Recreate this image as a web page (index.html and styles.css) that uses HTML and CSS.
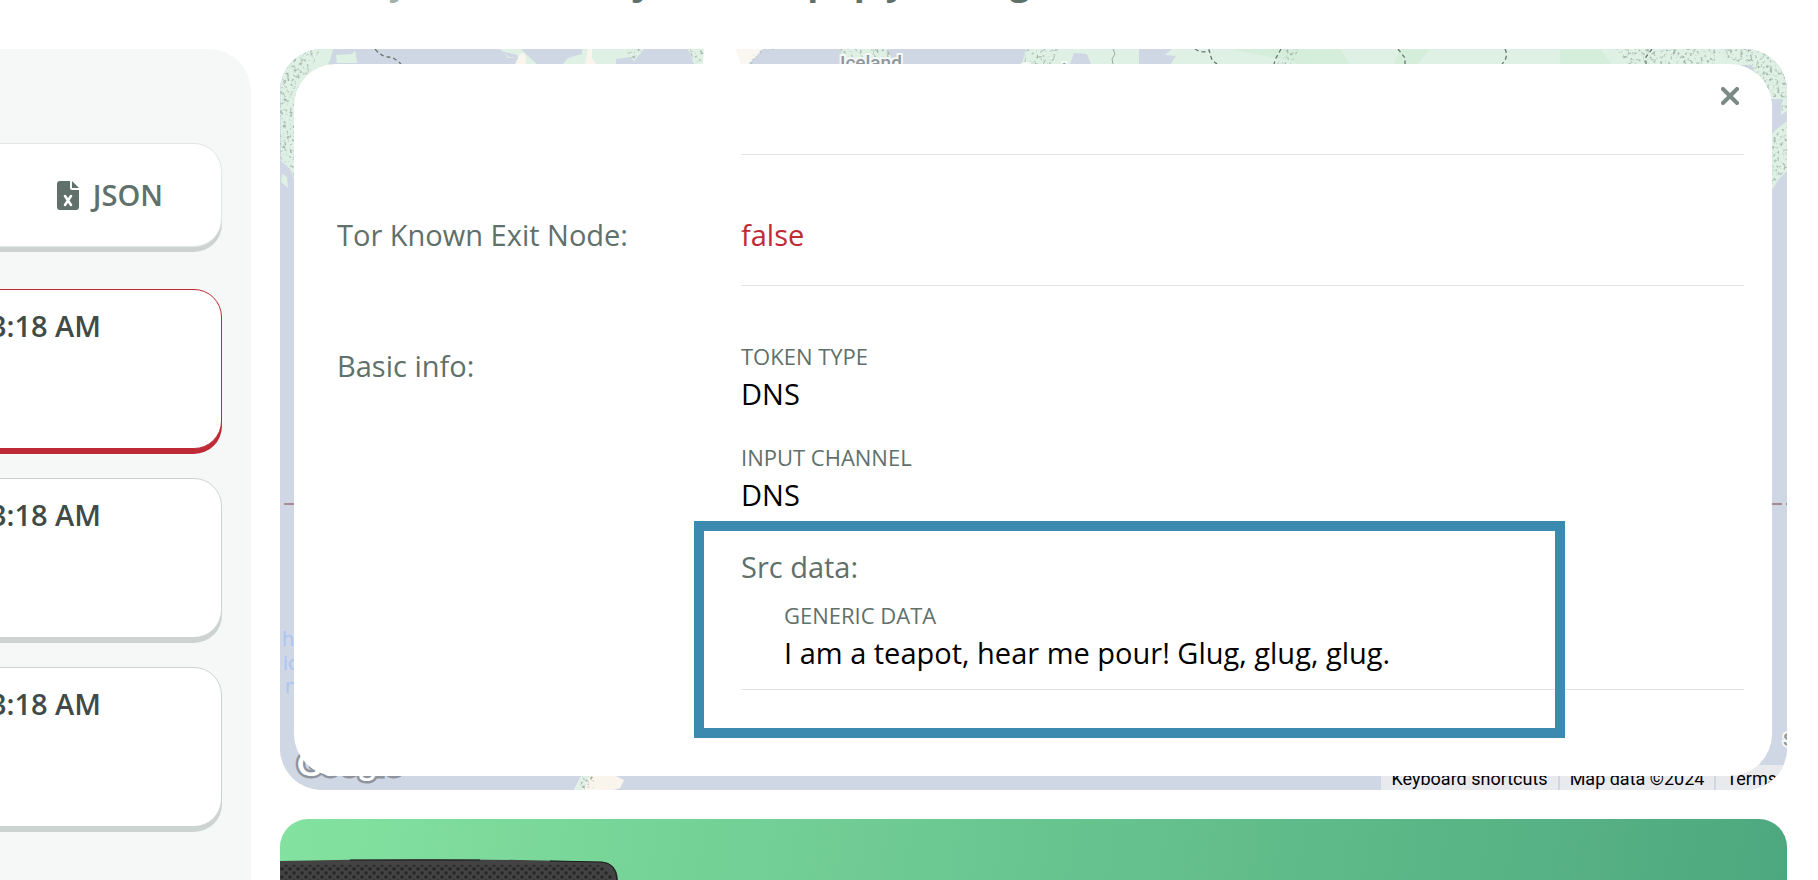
FILE: index.html
```html
<!DOCTYPE html>
<html lang="en">
<head>
    <meta charset="UTF-8">
    <title>Token history</title>
    <link rel="stylesheet" href="styles.css">
</head>
<body>
    <header class="top">
        <h1><span class="muted">History</span> for the new jar in the pup yard log</h1>
    </header>

    <main class="page">
        <aside class="sidebar">
            <div class="card export">
                <button type="button" class="btn-json">
                    <svg class="icon-file" viewBox="0 0 22 29" aria-hidden="true">
                        <path fill="#60706a" d="M3 0h10v7q0 2 2 2h7v17q0 3-3 3H3q-3 0-3-3V3q0-3 3-3z"/>
                        <path fill="#60706a" d="M15 0l7 7h-7z"/>
                        <path fill="none" stroke="#fff" stroke-width="2.6" stroke-linecap="round" d="M8 15l6 9M14 15l-6 9"/>
                    </svg>
                    JSON
                </button>
            </div>
            <div class="card alert active">3:18 AM</div>
            <div class="card alert">3:18 AM</div>
            <div class="card alert">3:18 AM</div>
        </aside>

        <div class="content">
            <section class="map">
                <svg class="map-bg" viewBox="0 0 1507 741" preserveAspectRatio="none" aria-hidden="true">
                    <defs>
                        <filter id="relief" x="0" y="0" width="100%" height="100%">
                            <feTurbulence type="fractalNoise" baseFrequency="0.3" numOctaves="4" seed="4"/>
                            <feColorMatrix values="0 0 0 0 .38  0 0 0 0 .46  0 0 0 0 .42  4 0 0 0 -2.1"/>
                            <feComposite in2="SourceGraphic" operator="in"/>
                        </filter>
                    </defs>
                    <rect width="1507" height="741" fill="#cfd6e4"/>
                    <!-- north america -->
                    <path fill="#dff1e5" d="M0 0h57l-6 14h26L75 0h145l8 9h17l-4 6h89l6-5 22-3 3-7h-20z"/>
                    <path fill="#dff1e5" d="M0 0h53l-4 16-34 30v86l-5-12-9-8z"/>
                    <path fill="#dff1e5" d="M2 125l5 3 1 11-7-6z"/>
                    <path fill="#cfd6e4" d="M221 2l16 4 1 3-9-1zM241 0h61v5l-14 4-5 6h-26l-10-9z"/>
                    <path fill="#dff1e5" d="M302 0h34v15h-50l4-6 12-3z"/>
                    <path fill="#dff1e5" d="M342 0h22l-10 12zM408 0h20v15h-14z"/>
                    <path fill="#faf5ec" d="M240 5q6-3 6 5v5h-11zM308 0h4v9l4 6h-11z"/>
                    <path fill="#cfd6e4" d="M57 0h20l-5 5-16 1 1 9h-9z"/>
                    <path fill="none" stroke="#69756f" stroke-width="1.3" stroke-dasharray="4 3" d="M95 0q7 8 13 8t13 7"/>
                    <!-- greenland -->
                    <path fill="#fff" d="M424 0h40v15h-41z"/>
                    <path fill="#faf7f3" d="M455 0h28l-14 15h-8z"/>
                    <!-- iceland, scandinavia, russia -->
                    <path fill="#dff1e5" d="M560 0h47l8 15h-50z"/>
                    <path fill="#dff1e5" d="M746 0h113v15H742z"/>
                    <path fill="#cfd6e4" d="M794 4l13 1 4 10h-21z"/>
                    <path fill="#dff1e5" d="M892 0h615v62l-6 4 1-16h-18l-12-34H890l6-9-11-1z"/>
                    <path fill="#d5eedc" d="M950 0l40 8 30 7h50L1060 0zM1120 0h30l-12 15h-24zM1280 0h40l12 15h-52z"/>
                    <path fill="#dff1e5" d="M1507 72v50l-8 8-13 20V90l11-10z"/>
                    <path fill="none" stroke="#69756f" stroke-width="1.3" stroke-dasharray="4 3" d="M915 0q8 5 14 1l3 10 5 4M1001 0l-5 9-2 6M1118 0l7 9v6M1225 0q4 8-3 15M1372 0l-6 8v7"/>
                    <path fill="none" stroke="#9aa8a1" stroke-width="1" d="M833 0l2 5-3 5 1 5"/>
                    <!-- patagonia -->
                    <path fill="#faf5ec" d="M301 727h35l8 4-4 8-6 2h-40z"/>
                    <path fill="#dff1e5" d="M301 727h8l-6 14h-8z"/>
                    <g filter="url(#relief)">
                        <path d="M0 0h40l-9 20-17 25v82L0 108z"/>
                        <path d="M344 0h18l-9 11zM409 0h15l-2 15h-8zM470 7l14-7h11l-16 6-7 9h-3z"/>
                        <path d="M560 0h47l6 8h-50zM746 0h32l-6 15h-28z"/>
                        <path d="M1005 0h14l-8 15h-14zM1335 0h100v15h-88z"/>
                        <path d="M1425 0h82v60l-6 4 1-16h-16l-22-33zM1507 75v45l-8 8-12 16V94z"/>
                        <path d="M302 727h12v14h-14z"/>
                    </g>
                    <path fill="none" stroke="#a98a92" stroke-width="2" stroke-dasharray="12 4" d="M4 455h30M1474 455h33"/>
                    <g class="sea">
                        <text x="2" y="597">h</text>
                        <text x="3" y="621">ic</text>
                        <text x="5" y="644">n</text>
                    </g>
                    <g class="place">
                        <text x="560" y="20">Iceland</text>
                        <text x="740" y="28">Sweden</text>
                        <text x="1503" y="697">S</text>
                    </g>
                    <text class="logo" x="17" y="727">Google</text>
                </svg>

                <div class="attribution">
                    <button type="button">Keyboard shortcuts</button>
                    <span>Map data ©2024</span>
                    <a href="#">Terms</a>
                </div>

                <div class="modal">
                    <button type="button" class="close" aria-label="Close">
                        <svg viewBox="0 0 18 18" aria-hidden="true">
                            <path fill="none" stroke="#7b8a84" stroke-width="4" stroke-linecap="round" d="M2 2l14 14M16 2L2 16"/>
                        </svg>
                    </button>
                    <div class="line"></div>
                    <dl class="row">
                        <dt>Tor Known Exit Node:</dt>
                        <dd class="bad">false</dd>
                    </dl>
                    <dl class="row">
                        <dt>Basic info:</dt>
                        <dd class="info">
                            <div class="field">
                                <p class="name">TOKEN TYPE</p>
                                <p>DNS</p>
                            </div>
                            <div class="field">
                                <p class="name">INPUT CHANNEL</p>
                                <p>DNS</p>
                            </div>
                            <div class="src">
                                <p class="src-title">Src data:</p>
                                <div class="src-field">
                                    <p class="name">GENERIC DATA</p>
                                    <p>I am a teapot, hear me pour! Glug, glug, glug.</p>
                                </div>
                                <div class="highlight"></div>
                            </div>
                        </dd>
                    </dl>
                </div>
            </section>

            <section class="banner">
                <svg class="device" viewBox="0 0 338 60" aria-hidden="true">
                    <defs>
                        <pattern id="mesh" width="8" height="8" patternUnits="userSpaceOnUse">
                            <circle cx="2" cy="2" r="1.8" fill="#262626"/>
                            <circle cx="6" cy="6" r="1.8" fill="#262626"/>
                        </pattern>
                    </defs>
                    <path fill="#434343" d="M0 2Q160-2 322 3q15 1 16 18v39H0z"/>
                    <path fill="url(#mesh)" d="M0 6h318q14 2 15 18v36H0z"/>
                    <path fill="none" stroke="#1b1b1b" stroke-width="1" d="M70 1h130M270 2l52 1q14 1 15 18"/>
                </svg>
            </section>
        </div>
    </main>
</body>
</html>
```

FILE: styles.css
```css
*{
    box-sizing: border-box;
}
body{
    display: flex;
    flex-direction: column;
    margin: 0;
    height: 100vh;
    overflow: hidden;
    background: #fff;
    color: #000;
    font-family: "Open Sans", "Noto Sans", sans-serif;
    font-size: 29px;
    line-height: 40px;
}
p, dl, dd, h1{
    margin: 0;
}
button{
    font: inherit;
    color: inherit;
    background: none;
    border: none;
    padding: 0;
    cursor: pointer;
}
.top{
    flex: none;
    display: flex;
    align-items: flex-start;
    height: 49px;
    padding-left: 283px;
}
.top h1{
    margin-top: -44px;
    font-size: 36px;
    line-height: 50px;
    font-weight: 700;
    color: #60706a;
    white-space: nowrap;
}
.top .muted{
    color: #a3b0aa;
    font-weight: 600;
}
.page{
    flex: 1;
    min-height: 0;
    display: flex;
    gap: 29px;
    padding-right: 31px;
}
.sidebar{
    flex: 0 0 251px;
    padding: 94px 29px 0 0;
    background: #f6f8f8;
    border-top-right-radius: 42px;
}
.card{
    margin-left: -30px;
    margin-bottom: 29px;
    height: 160px;
    background: #fff;
    border: 1px solid #cdd3d0;
    border-radius: 28px;
    box-shadow: 0 5px 0 #cdd3d0;
}
.export{
    display: flex;
    justify-content: flex-end;
    align-items: center;
    height: 104px;
    margin-bottom: 42px;
    padding-right: 58px;
    border-color: #e1e5e3;
}
.btn-json{
    display: flex;
    align-items: center;
    gap: 14px;
    font-weight: 600;
    color: #60706a;
}
.icon-file{
    width: 22px;
    height: 29px;
}
.alert{
    padding: 16px 120px 0 0;
    text-align: right;
    white-space: nowrap;
    font-weight: 600;
    color: #404b47;
}
.active{
    border-color: #be2b36;
    box-shadow: 0 5px 0 #be2b36;
}
.content{
    flex: 1;
    min-width: 0;
    display: flex;
    flex-direction: column;
    gap: 29px;
}
.map{
    flex: none;
    position: relative;
    padding: 15px 15px 14px 14px;
    border-radius: 42px;
    overflow: hidden;
    background: #cfd6e4;
}
.map-bg{
    position: absolute;
    top: 0;
    left: 0;
    width: 100%;
    height: 100%;
}
.sea{
    font-size: 20px;
    fill: #a9c4f5;
}
.place{
    font: 500 19px Roboto, sans-serif;
    fill: #8f979c;
    stroke: #f4f7f6;
    stroke-width: 4px;
    paint-order: stroke;
}
.logo{
    font: 700 33px Lato, sans-serif;
    fill: #fff;
    stroke: #8d949e;
    stroke-width: 5px;
    paint-order: stroke;
}
.attribution{
    position: absolute;
    right: 0;
    bottom: 0;
    display: flex;
    gap: 2px;
    font-family: Roboto, sans-serif;
    font-size: 18px;
    line-height: 23px;
}
.attribution > *{
    padding: 2px 10px 0;
    background: #e9eaee;
    color: #000;
    text-decoration: none;
}
.modal{
    position: relative;
    padding: 90px 28px 86px 43px;
    background: #fff;
    border-radius: 42px;
}
.close{
    position: absolute;
    top: 23px;
    right: 33px;
    width: 18px;
    height: 18px;
}
.close svg{
    display: block;
}
.line{
    margin-left: 404px;
    border-top: 1px solid #e1e4e2;
}
.row{
    display: grid;
    grid-template-columns: 404px 1fr;
}
.row dt{
    padding-top: 60px;
    color: #60706a;
}
.row dd{
    padding: 60px 0 30px;
    border-bottom: 1px solid #e1e4e2;
}
.row .bad{
    color: #be2b36;
}
.row .info{
    padding: 55px 0 16px;
}
.name{
    margin-bottom: 3px;
    font-size: 22px;
    line-height: 30px;
    color: #60706a;
}
.field{
    margin-bottom: 28px;
}
.src{
    position: relative;
    margin-top: 32px;
}
.src-title{
    margin-bottom: 13px;
    color: #60706a;
}
.src-field{
    padding-left: 43px;
}
.highlight{
    position: absolute;
    top: -26px;
    right: 179px;
    bottom: -65px;
    left: -47px;
    border: 10px solid #3d8ab0;
}
.banner{
    flex: 1;
    min-height: 0;
    padding-top: 40px;
    border-radius: 28px 28px 0 0;
    overflow: hidden;
    background: linear-gradient(100deg, #84e2a0, #4ea87f);
}
.device{
    display: block;
    width: 338px;
}
```
